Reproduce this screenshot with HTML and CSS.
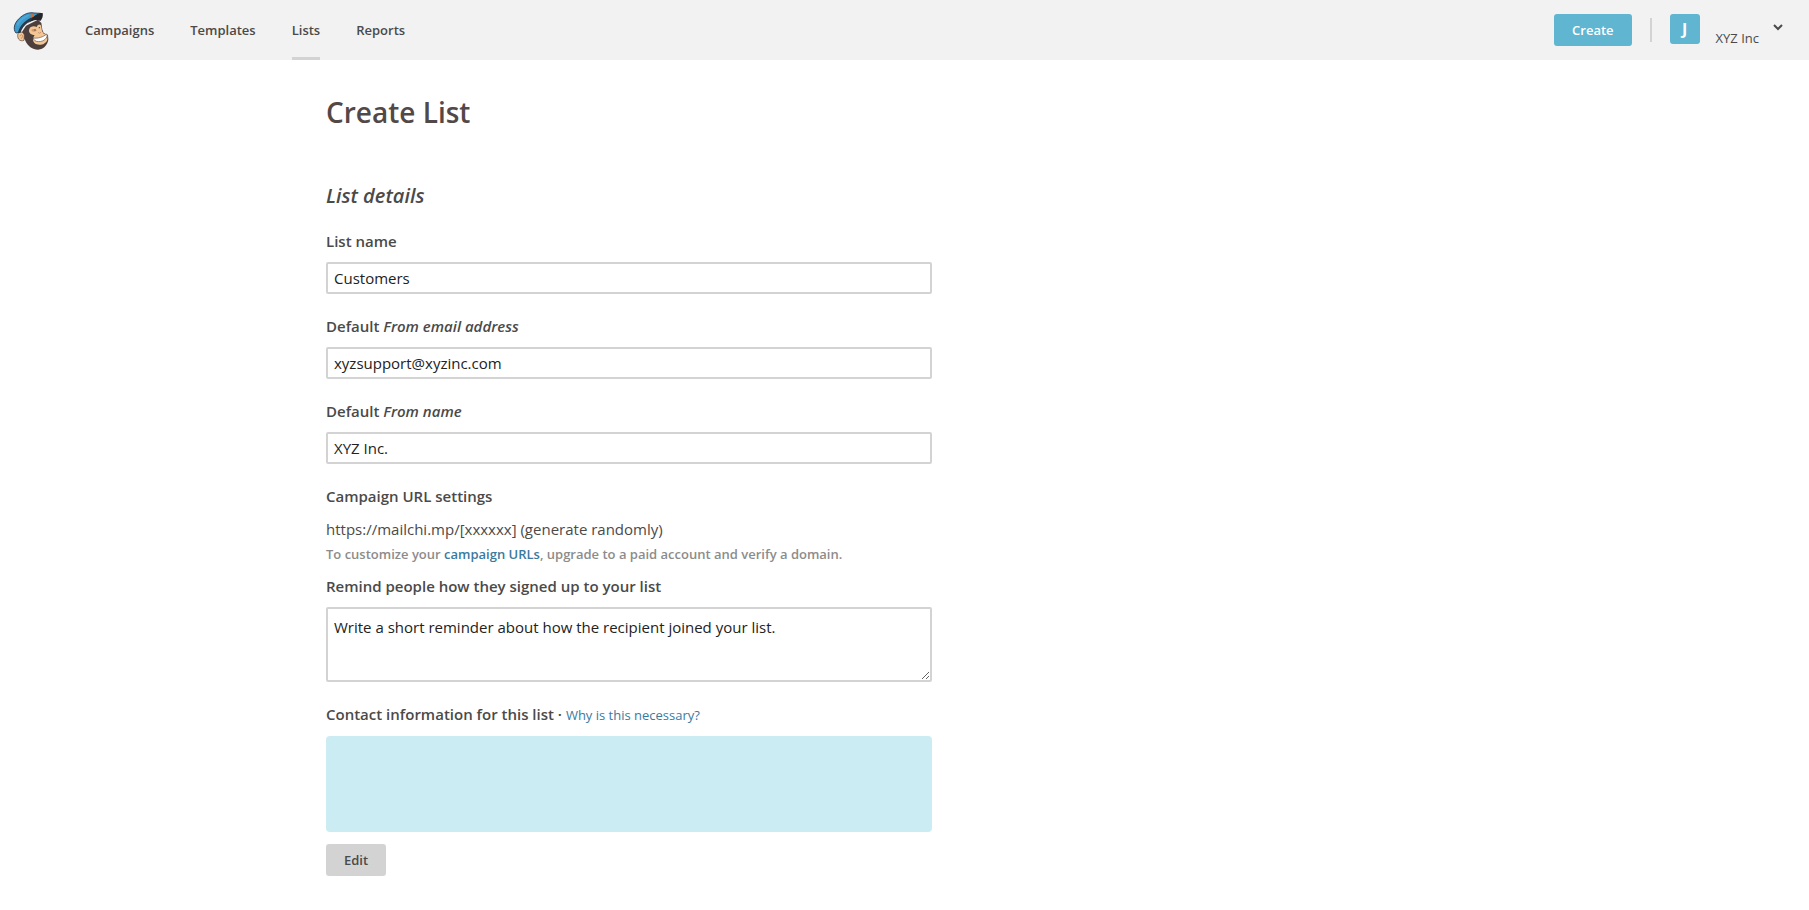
FILE: index.html
```html
<!DOCTYPE html>
<html lang="en">
<head>
    <meta charset="UTF-8">
    <meta name="viewport" content="width=device-width, initial-scale=1.0">
    <title>Create List</title>
    <link rel="stylesheet" href="styles.css">
</head>
<body>
    <header class="topbar">
        <a href="#" class="logo" aria-label="Home">
            <svg width="42" height="46" viewBox="0 0 126 138">
                <!-- head -->
                <path fill="#4c3f3c" d="M34 78 L48 56 L84 38 L94 48 L97 68 L101 78 L114 84 L115 98 C112 114 102 126 84 128 C68 128 52 116 46 101 Z"/>
                <!-- ear -->
                <path fill="#f3c795" stroke="#5a443c" stroke-width="2" d="M42 100 C28 106 20 92 24 80 C28 72 40 74 43 84 Z"/>
                <path fill="none" stroke="#c98c62" stroke-width="3" d="M30 88 C32 81 38 82 38 88 L34 95"/>
                <!-- face -->
                <path fill="#f3c795" d="M58 66 C60 58 72 56 80 60 C84 50 93 50 94 60 L96 72 L101 80 L112 84 L112 98 C108 111 92 116 80 112 C68 108 66 96 74 84 C62 84 54 76 58 66 Z"/>
                <!-- eyes and nose -->
                <ellipse cx="72" cy="70" rx="8" ry="4" fill="#d39a6b"/>
                <circle cx="75" cy="69" r="2" fill="#5a443c"/>
                <circle cx="88" cy="62" r="2" fill="#5a443c"/>
                <path fill="none" stroke="#b87f58" stroke-width="2" d="M84 76 L89 79 L93 75"/>
                <!-- smile -->
                <path fill="#fff" stroke="#6b5044" stroke-width="2" d="M70 93 C84 95 100 90 110 81 C115 92 102 104 86 104 C76 104 71 99 70 93 Z"/>
                <!-- cap -->
                <path fill="#3b9bcb" stroke="#2b4a63" stroke-width="3" d="M18 78 C8 66 13 48 28 34 C40 22 56 15 72 18 L92 19 L84 34 C58 36 34 48 27 76 Z"/>
                <path fill="#4fa8d3" d="M20 52 C30 34 46 24 62 22 L52 30 C38 36 29 44 24 58 Z"/>
                <path fill="#283a4c" d="M24 78 C28 54 50 34 84 24 L88 36 C60 38 40 52 31 78 Z"/>
                <path fill="#25272c" d="M64 38 C72 24 88 16 98 18 C100 26 97 36 91 42 C80 36 68 38 52 50 Z"/>
                <path fill="#c9703d" d="M60 24 L68 20 L72 28 L64 32 Z"/>
            </svg>
        </a>
        <nav class="main-nav">
            <a href="#">Campaigns</a>
            <a href="#">Templates</a>
            <a href="#" class="active">Lists</a>
            <a href="#">Reports</a>
        </nav>
        <div class="account">
            <button type="button" class="btn btn-primary">Create</button>
            <span class="divider"></span>
            <button type="button" class="account-menu">
                <span class="avatar">J</span>
                <span class="account-name">XYZ Inc</span>
                <svg class="caret" width="10" height="7" viewBox="0 0 10 7">
                    <path d="M1 1 L5 5 L9 1" fill="none" stroke="#4a4a4a" stroke-width="2"/>
                </svg>
            </button>
        </div>
    </header>

    <main class="container">
        <h1>Create List</h1>
        <form class="list-form">
            <h2>List details</h2>
            <div class="form-group">
                <label for="list-name">List name</label>
                <input type="text" id="list-name" name="list-name" value="Customers">
            </div>
            <div class="form-group">
                <label for="from-email">Default <em>From email address</em></label>
                <input type="email" id="from-email" name="from-email" value="xyzsupport@xyzinc.com">
            </div>
            <div class="form-group">
                <label for="from-name">Default <em>From name</em></label>
                <input type="text" id="from-name" name="from-name" value="XYZ Inc.">
            </div>
            <div class="form-group url-settings">
                <h3>Campaign URL settings</h3>
                <p>https://mailchi.mp/[xxxxxx] (generate randomly)</p>
                <p class="help">To customize your <a href="#">campaign URLs</a>, upgrade to a paid account and verify a domain.</p>
            </div>
            <div class="form-group">
                <label for="reminder">Remind people how they signed up to your list</label>
                <textarea id="reminder" name="reminder">Write a short reminder about how the recipient joined your list.</textarea>
            </div>
            <div class="form-group">
                <h3>Contact information for this list · <a href="#">Why is this necessary?</a></h3>
                <div class="contact-info"></div>
                <button type="button" class="btn btn-edit">Edit</button>
            </div>
        </form>
    </main>
</body>
</html>
```
FILE: styles.css
```css
* {
    box-sizing: border-box;
}
body {
    margin: 0;
    font-family: "Open Sans", sans-serif;
    font-size: 15px;
    line-height: 24px;
    color: #4a4a4a;
    background-color: #fff;
}
a {
    color: #3b7a9e;
    text-decoration: none;
}
button {
    font-family: inherit;
    border: none;
    cursor: pointer;
}

/* Top bar */
.topbar {
    display: flex;
    align-items: center;
    height: 60px;
    padding: 0 24px 0 10px;
    background-color: #f2f2f2;
}
.logo {
    display: flex;
}
.main-nav {
    display: flex;
    gap: 36px;
    margin-left: 33px;
}
.main-nav a {
    height: 60px;
    font-size: 13px;
    font-weight: 600;
    line-height: 60px;
    color: #4a4a4a;
}
.main-nav .active {
    border-bottom: 3px solid #d3d3d3;
}
.account {
    display: flex;
    align-items: center;
    margin-left: auto;
}
.btn {
    height: 32px;
    padding: 0 18px;
    border-radius: 3px;
    font-size: 13px;
    font-weight: 600;
    line-height: 32px;
}
.btn-primary {
    background-color: #60b5d1;
    color: #fff;
}
.divider {
    width: 2px;
    height: 24px;
    margin: 0 18px;
    background-color: #d3d3d3;
}
.account-menu {
    display: flex;
    padding: 0;
    background: none;
    color: #4a4a4a;
}
.avatar {
    width: 30px;
    height: 30px;
    margin-bottom: 2px;
    border-radius: 3px;
    background-color: #60b5d1;
    color: #fff;
    font-size: 16px;
    font-weight: 700;
    line-height: 30px;
}
.account-name {
    align-self: flex-end;
    margin-left: 16px;
    font-size: 13px;
    line-height: 16px;
}
.caret {
    margin: 10px 2px 0 14px;
}

/* Page content */
.container {
    max-width: 1157px;
    margin: 0 auto;
    padding-top: 32px;
}
h1 {
    margin: 0;
    font-size: 28px;
    font-weight: 600;
    line-height: 40px;
    color: #524848;
}
h2 {
    margin: 48px 0 17px;
    font-size: 20px;
    font-weight: 600;
    font-style: italic;
    line-height: 32px;
}
.list-form {
    max-width: 606px;
}
.form-group {
    margin-bottom: 20px;
}
.form-group label,
.form-group h3 {
    display: block;
    margin: 0 0 9px;
    font-size: 15px;
    font-weight: 600;
    line-height: 24px;
}
.form-group h3 a {
    font-size: 13px;
    font-weight: 400;
}
.form-group input,
.form-group textarea {
    display: block;
    width: 100%;
    border: 2px solid #d3d3d3;
    border-radius: 2px;
    background-color: #fff;
    color: #222;
    font-family: inherit;
    font-size: 15px;
}
.form-group input {
    height: 32px;
    padding: 0 6px;
}
.form-group textarea {
    height: 75px;
    padding: 6px;
    line-height: 24px;
    resize: vertical;
}
.form-group p {
    margin: 0 0 1px;
}
.form-group .help {
    font-size: 13px;
    font-weight: 600;
    color: #8c8c8c;
}
.url-settings {
    margin-bottom: 8px;
}
.contact-info {
    height: 96px;
    margin-bottom: 12px;
    border-radius: 4px;
    background-color: #cbecf3;
}
.btn-edit {
    background-color: #d3d3d3;
    color: #4a4a4a;
}
```
